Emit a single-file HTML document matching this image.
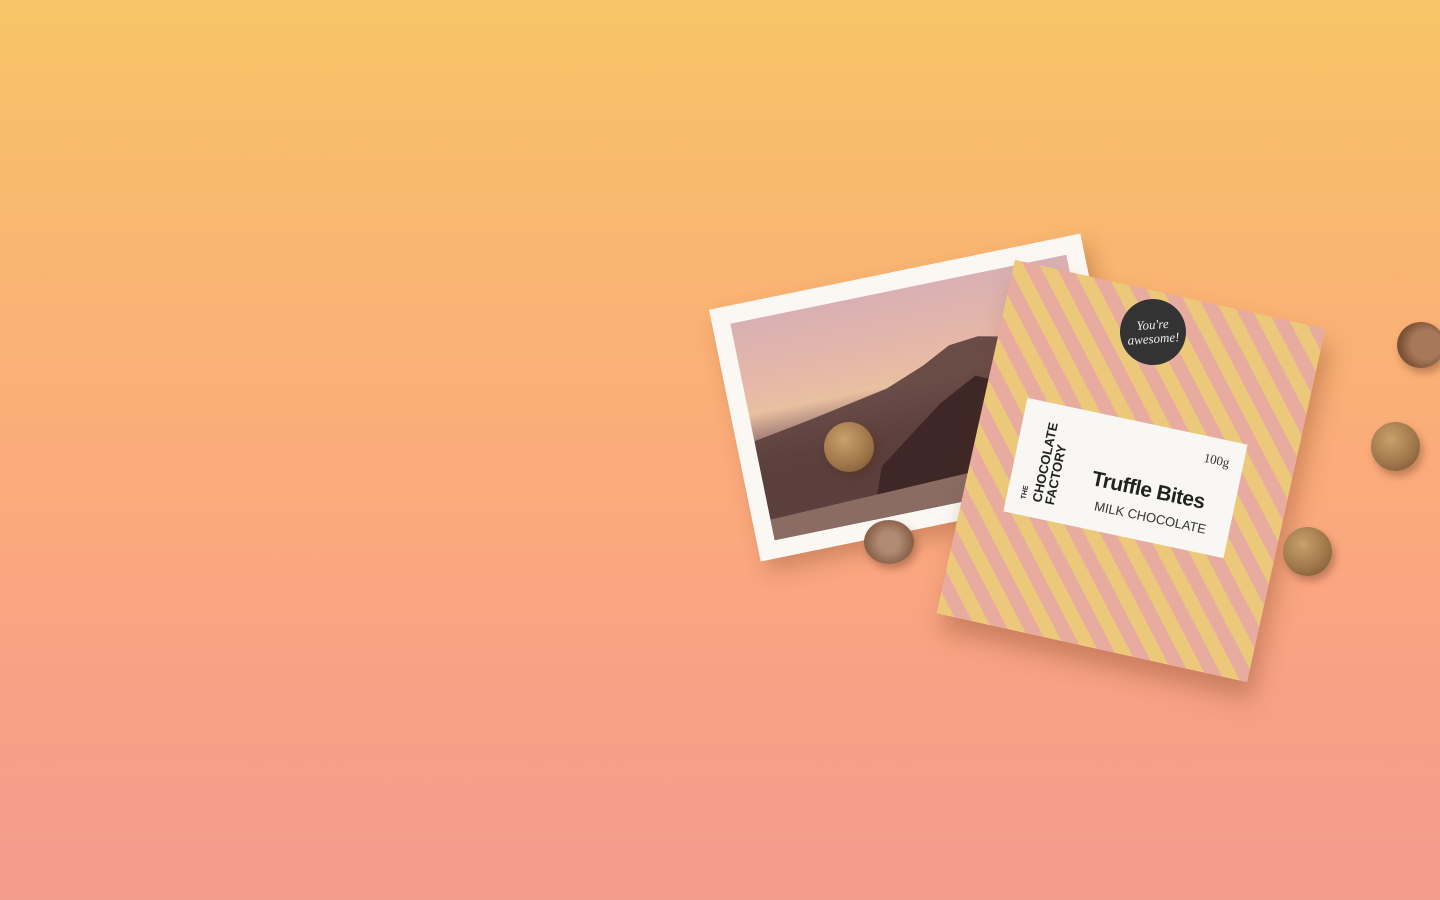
<!DOCTYPE html>
<html><head><meta charset="utf-8"><style>
html,body{margin:0;padding:0}
body{width:1440px;height:900px;overflow:hidden;position:relative;background:linear-gradient(180deg,#f7c567 0%,#f9b770 25%,#fbaa7c 55%,#f7a087 80%,#f39c8e 100%);font-family:"Liberation Sans",sans-serif}
.abs{position:absolute}
.photo{left:731px;top:269px;width:379px;height:257px;background:#fbf8f4;transform:rotate(-11.6deg);box-shadow:6px 12px 20px rgba(120,60,30,.3)}
.photo .img{position:absolute;left:18px;top:18px;right:18px;bottom:18px;background:linear-gradient(180deg,#d9b0b3 0%,#e7b8a8 30%,#e9c0a0 42%,#b08a80 52%,#5a3f3c 65%,#4a3230 85%,#7c625a 100%);overflow:hidden}
.bag{left:972px;top:290px;width:318px;height:362px;transform:rotate(12.5deg);background:repeating-linear-gradient(50deg,#ecc97a 0 14px,#e8aba0 14px 28px);box-shadow:8px 16px 24px rgba(120,60,30,.35)}
.label{left:1013px;top:420px;width:225px;height:116px;background:#f9f7f4;transform:rotate(12deg)}
.ball{border-radius:50%;background:radial-gradient(circle at 40% 35%,#c9a06a,#9d7448 60%,#6e4e30);box-shadow:3px 5px 8px rgba(90,40,20,.35)}
</style></head><body>
<div class="abs photo"><div class="img">
<svg width="343" height="221" viewBox="0 0 343 221" style="position:absolute;left:0;top:0">
<path d="M0 120 L60 110 L140 95 L180 80 L210 65 L240 62 L300 75 L343 70 L343 221 L0 221Z" fill="#5c403d" opacity=".9"/>
<path d="M120 170 L190 120 L230 100 L290 130 L343 150 L343 221 L100 221Z" fill="#3e2726"/>
<path d="M0 200 L343 190 L343 221 L0 221Z" fill="#8a6c63"/>
</svg></div></div>
<div class="abs bag"></div>
<div class="abs label">
<div class="abs" style="right:14px;top:14px;font:13px 'Liberation Serif',serif;color:#333">100g</div>
<div class="abs" style="left:8px;top:100px;transform:rotate(-90deg);transform-origin:0 0;font:bold 13px/13px 'Liberation Sans';color:#222;white-space:nowrap"><span style="font-size:7px">THE</span><br>CHOCOLATE<br>FACTORY</div>
<div class="abs" style="left:80px;top:54px;font:bold 21px 'Liberation Sans';color:#222;letter-spacing:-.5px">Truffle Bites</div>
<div class="abs" style="left:88px;top:84px;font:13px 'Liberation Sans';color:#333">MILK CHOCOLATE</div>
</div>
<div class="abs" style="left:1120px;top:299px;width:66px;height:66px;border-radius:50%;background:#333;color:#eee;font:italic 13px/14px 'Liberation Serif',serif;text-align:center;display:flex;align-items:center;justify-content:center;transform:rotate(-4deg)">You're<br>awesome!</div>
<div class="abs ball" style="left:824px;top:422px;width:50px;height:50px"></div>
<div class="abs ball" style="left:1371px;top:422px;width:49px;height:49px"></div>
<div class="abs ball" style="left:1283px;top:527px;width:49px;height:49px"></div>
<div class="abs ball" style="left:1397px;top:322px;width:48px;height:46px;background:radial-gradient(circle at 60% 50%,#a7785a 40%,#7a5235 70%)"></div>
<div class="abs ball" style="left:864px;top:520px;width:50px;height:44px;background:radial-gradient(circle at 50% 50%,#b18a74 30%,#8a6248 70%)"></div>
</body></html>
